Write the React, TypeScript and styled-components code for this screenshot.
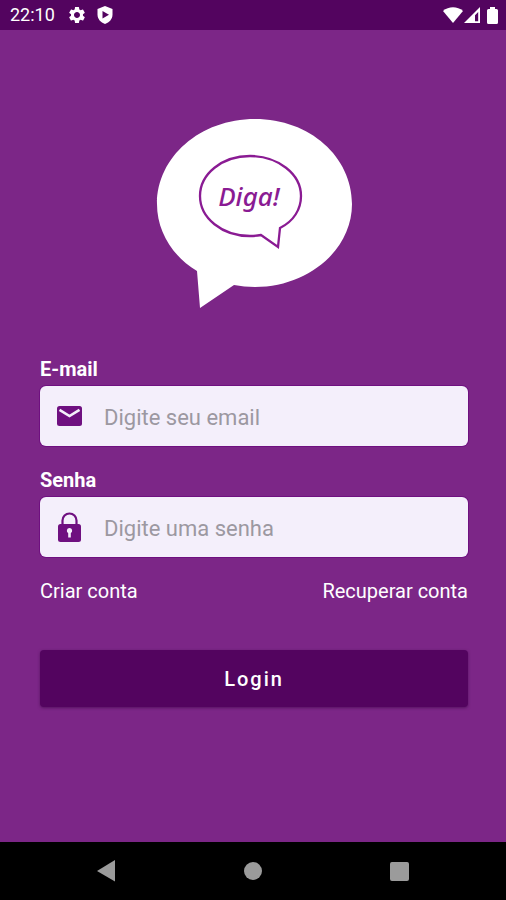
import React from "react";
import styled, { createGlobalStyle } from "styled-components";
import { MdSettings } from "react-icons/md";

const colors = {
  primary: "#7c2687",
  dark: "#53045f",
  icon: "#6f1080",
  outline: "#8a1b93",
  field: "#f4effb",
  placeholder: "#9c98a1",
  nav: "#9b9b9b",
};

const GlobalStyle = createGlobalStyle`
  *, *::before, *::after { box-sizing: border-box; }
  body {
    margin: 0;
    background: ${colors.primary};
    font-family: Roboto, "Liberation Sans", sans-serif;
  }
`;

const Screen = styled.div`
  min-height: 100vh;
  display: flex;
  flex-direction: column;
  background: ${colors.primary};
  color: #fff;
`;

const StatusBar = styled.header`
  height: 30px;
  padding: 0 8px 0 10px;
  display: flex;
  align-items: center;
  justify-content: space-between;
  background: ${colors.dark};
`;

const StatusGroup = styled.div<{ $gap: number }>`
  display: flex;
  align-items: center;
  gap: ${(p) => p.$gap}px;

  svg {
    display: block;
  }
`;

const Clock = styled.time`
  font-size: 18px;
  line-height: 30px;
  margin-right: 2px;
`;

const Content = styled.main`
  flex: 1;
  display: flex;
  flex-direction: column;
  align-items: center;
  padding: 89px 38px 40px 40px;
`;

const Logo = styled.svg`
  display: block;
  width: 194px;
  height: 190px;
  margin-bottom: 48px;
  overflow: visible;
`;

const LogoText = styled.text`
  font-family: "Noto Sans", "Open Sans", sans-serif;
  font-size: 26px;
  font-style: italic;
  font-weight: 500;
  fill: ${colors.outline};
`;

const Form = styled.form`
  width: 100%;
  display: flex;
  flex-direction: column;
  gap: 22px;
`;

const Field = styled.div`
  display: flex;
  flex-direction: column;
  gap: 5px;
`;

const Label = styled.label`
  font-size: 20px;
  line-height: 24px;
  font-weight: 700;
`;

const InputBox = styled.div`
  height: 60px;
  display: flex;
  align-items: center;
  gap: 20px;
  padding: 0 14px;
  border-radius: 6px;
  background: ${colors.field};
  box-shadow: 0 0 0 1px ${colors.icon};
  color: ${colors.icon};

  svg {
    flex: none;
  }
`;

const Input = styled.input`
  flex: 1;
  min-width: 0;
  height: 100%;
  padding: 2px 0 0;
  border: 0;
  outline: 0;
  background: transparent;
  color: ${colors.dark};
  font-family: inherit;
  font-size: 22px;

  &::placeholder {
    color: ${colors.placeholder};
    opacity: 1;
  }
`;

const Links = styled.nav`
  display: flex;
  justify-content: space-between;
`;

const TextLink = styled.a`
  color: #fff;
  font-size: 20px;
  line-height: 24px;
  text-decoration: none;
`;

const LoginButton = styled.button`
  height: 57px;
  margin-top: 25px;
  border: 0;
  border-radius: 4px;
  background: ${colors.dark};
  box-shadow: 0 1px 3px rgba(50, 0, 60, 0.5);
  color: #fff;
  font-family: inherit;
  font-size: 20px;
  font-weight: 500;
  letter-spacing: 2px;
  cursor: pointer;
`;

const NavBar = styled.footer`
  height: 58px;
  padding: 0 33px;
  display: grid;
  grid-template-columns: repeat(3, 1fr);
  align-items: center;
  justify-items: center;
  background: #000;
`;

const NavButton = styled.button`
  display: flex;
  padding: 8px;
  border: 0;
  background: transparent;
  color: ${colors.nav};
  cursor: pointer;
`;

const ShieldIcon = () => (
  <svg width="16" height="18" viewBox="0 0 16 18" aria-hidden="true">
    <path d="M8 0 15.500 3V8.500C15.500 13 12.300 16.500 8 18 3.700 16.500.5 13 .5 8.500V3Z" fill="#fff" />
    <path d="M5.500 5 12 8.800 5.500 12.500Z" fill={colors.dark} />
  </svg>
);

const WifiIcon = () => (
  <svg width="20" height="16" viewBox="0 0 20 16" aria-hidden="true">
    <path d="M0 4C5.500-1 14.500-1 20 4L10 16Z" fill="#fff" />
  </svg>
);

const SignalIcon = () => (
  <svg width="16" height="16" viewBox="0 0 16 16" aria-hidden="true">
    <path d="M16 0V16H0ZM14.200 5 11 8.200V14.300H14.200Z" fill="#fff" fillRule="evenodd" />
  </svg>
);

const BatteryIcon = () => (
  <svg width="11" height="17" viewBox="0 0 11 17" aria-hidden="true">
    <path d="M3 0H8V2H9.500Q11 2 11 3.500V15.500Q11 17 9.500 17H1.500Q0 17 0 15.500V3.500Q0 2 1.500 2H3Z" fill="#fff" />
  </svg>
);

const MailIcon = () => (
  <svg width="30" height="30" viewBox="0 0 30 30" aria-hidden="true">
    <rect x="3" y="5" width="25" height="20" rx="2.500" fill="currentColor" />
    <path d="M5.500 8.800 15.500 15 25.500 8.800" fill="none" stroke={colors.field} strokeWidth="2.600" />
  </svg>
);

const LockIcon = () => (
  <svg width="30" height="30" viewBox="0 0 30 30" aria-hidden="true">
    <path d="M8.500 13V8.500a7 7 0 0 1 14 0V13" fill="none" stroke="currentColor" strokeWidth="2.200" />
    <rect x="4" y="12" width="23" height="18" rx="2.500" fill="currentColor" />
    <path d="M15.500 16a2.800 2.800 0 0 1 1.300 5.200V25.500H14.200V21.200A2.800 2.800 0 0 1 15.500 16Z" fill={colors.field} />
  </svg>
);

export default function App() {
  return (
    <Screen>
      <GlobalStyle />
      <StatusBar>
        <StatusGroup $gap={10}>
          <Clock>22:10</Clock>
          <MdSettings size={20} aria-hidden="true" />
          <ShieldIcon />
        </StatusGroup>
        <StatusGroup $gap={7}>
          <StatusGroup $gap={1}>
            <WifiIcon />
            <SignalIcon />
          </StatusGroup>
          <BatteryIcon />
        </StatusGroup>
      </StatusBar>

      <Content>
        <Logo viewBox="0 0 194 190" role="img" aria-label="Diga!">
          <path
            d="M40 152C15 137 0 112 0 85C0 38 43 0 98 0S195 38 195 85C195 131 151 168 98 168Q87 168 77 166L43 189Z"
            fill="#fff"
          />
          <path
            d="M123 109C137 102 144 90 144 77C144 55 121 37 93 37S43 55 43 77S65 117 93 117Q99 117 104 116L121 128Z"
            fill="none"
            stroke={colors.outline}
            strokeWidth="2.300"
          />
          <LogoText x="92" y="87" textAnchor="middle">Diga!</LogoText>
        </Logo>

        <Form onSubmit={(e) => e.preventDefault()}>
          <Field>
            <Label htmlFor="email">E-mail</Label>
            <InputBox>
              <MailIcon />
              <Input id="email" type="email" placeholder="Digite seu email" />
            </InputBox>
          </Field>
          <Field>
            <Label htmlFor="password">Senha</Label>
            <InputBox>
              <LockIcon />
              <Input id="password" type="password" placeholder="Digite uma senha" />
            </InputBox>
          </Field>
          <Links>
            <TextLink href="#criar">Criar conta</TextLink>
            <TextLink href="#recuperar">Recuperar conta</TextLink>
          </Links>
          <LoginButton type="submit">Login</LoginButton>
        </Form>
      </Content>

      <NavBar>
        <NavButton type="button" aria-label="Voltar">
          <svg width="18" height="22" viewBox="0 0 18 22">
            <path d="M18 0V21.500L0 11Z" fill="currentColor" />
          </svg>
        </NavButton>
        <NavButton type="button" aria-label="Início">
          <svg width="18" height="18" viewBox="0 0 18 18">
            <circle cx="9" cy="9" r="9" fill="currentColor" />
          </svg>
        </NavButton>
        <NavButton type="button" aria-label="Recentes">
          <svg width="19" height="19" viewBox="0 0 20 20">
            <rect width="20" height="20" rx="2" fill="currentColor" />
          </svg>
        </NavButton>
      </NavBar>
    </Screen>
  );
}
